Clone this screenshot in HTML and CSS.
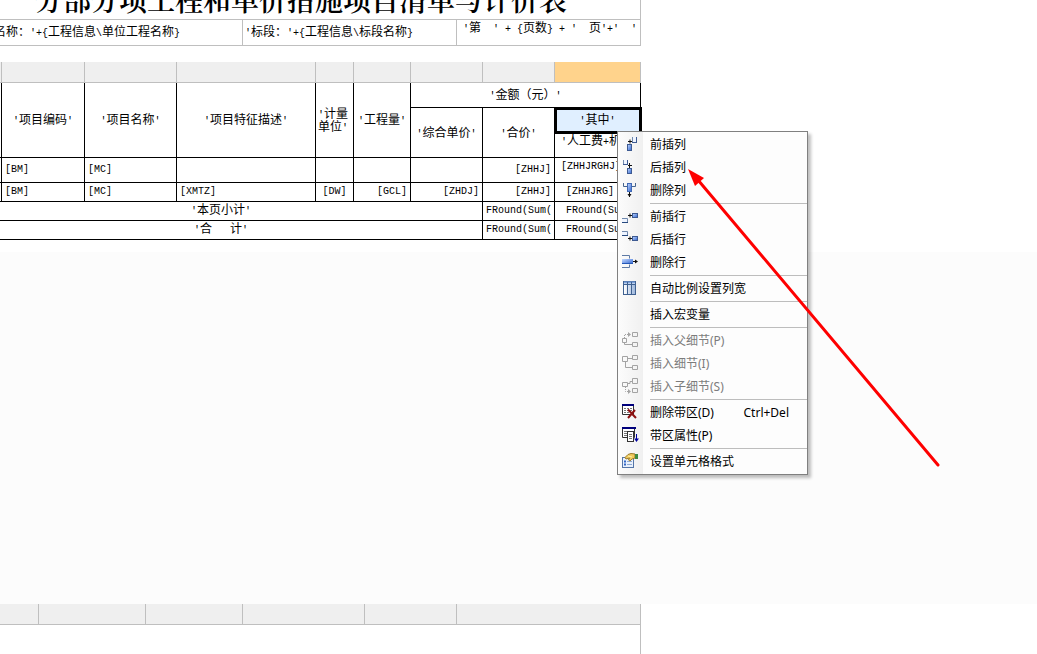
FILE: index.html
```html
<!DOCTYPE html>
<html lang="zh-CN">
<head>
<meta charset="utf-8">
<title>分部分项工程和单价措施项目清单与计价表</title>
<link rel="stylesheet" href="styles.css">
</head>
<body>
<svg class="defs" aria-hidden="true">
  <defs>
    <linearGradient id="blue" x1="0" y1="0" x2="1" y2="1"><stop offset="0" stop-color="#c4daff"/><stop offset="1" stop-color="#2f63cf"/></linearGradient>
    <linearGradient id="col" x1="0" y1="0" x2="1" y2="0"><stop offset="0" stop-color="#fff"/><stop offset="1" stop-color="#9db7dc"/></linearGradient>
  </defs>
</svg>
<main class="designer">
  <section class="head">
    <h1 class="title">分部分项工程和单价措施项目清单与计价表</h1>
    <div class="info">
      <div class="info-name">名称：<span class="l">'+{</span>工程信息<span class="l">\</span>单位工程名称<span class="l">}</span></div>
      <div class="info-section"><span class="l">'</span>标段：<span class="l">'+{</span>工程信息<span class="l">\</span>标段名称<span class="l">}</span></div>
      <div class="info-page"><span class="l">'</span>第<span class="l">&nbsp; ' + {</span>页数<span class="l">} + ' &nbsp;</span>页<span class="l">'+' &nbsp;'</span></div>
    </div>
  </section>

  <table class="grid">
    <colgroup><col class="c0"><col class="c1"><col class="c2"><col class="c3"><col class="c4"><col class="c5"><col class="c6"><col class="c7"><col class="c8"></colgroup>
    <tbody>
      <tr class="band"><td></td><td></td><td></td><td></td><td></td><td></td><td></td><td></td><td class="active"></td></tr>
      <tr class="tall">
        <th rowspan="3"></th>
        <th rowspan="3"><span class="l">'</span>项目编码<span class="l">'</span></th>
        <th rowspan="3"><span class="l">'</span>项目名称<span class="l">'</span></th>
        <th rowspan="3"><span class="l">'</span>项目特征描述<span class="l">'</span></th>
        <th rowspan="3" class="unit"><span class="l">'</span>计量<br>单位<span class="l">'</span></th>
        <th rowspan="3"><span class="l">'</span>工程量<span class="l">'</span></th>
        <th colspan="3"><span class="l">'</span>金额（元）<span class="l">'</span></th>
      </tr>
      <tr class="tall">
        <th rowspan="2"><span class="l">'</span>综合单价<span class="l">'</span></th>
        <th rowspan="2"><span class="l">'</span>合价<span class="l">'</span></th>
        <th class="selected"><span class="l">'</span>其中<span class="l">'</span></th>
      </tr>
      <tr class="tall"><th class="up clip"><span class="l">'</span>人工费<span class="l">+</span>机</th></tr>
      <tr class="tall code"><td></td><td>[BM]</td><td>[MC]</td><td></td><td></td><td></td><td></td><td class="r">[ZHHJ]</td><td class="up">[ZHHJRGHJ]</td></tr>
      <tr class="code"><td></td><td>[BM]</td><td>[MC]</td><td>[XMTZ]</td><td class="c">[DW]</td><td class="r">[GCL]</td><td class="r">[ZHDJ]</td><td class="r">[ZHHJ]</td><td class="tab">[ZHHJRG]</td></tr>
      <tr><td colspan="7" class="total"><span class="l">'</span>本页小计<span class="l">'</span></td><td class="sum">FRound(Sum(</td><td class="sum tab">FRound(Sum(</td></tr>
      <tr><td colspan="7" class="total"><span class="l">'</span>合<span class="l">&nbsp; &nbsp;</span>计<span class="l">'</span></td><td class="sum">FRound(Sum(</td><td class="sum tab">FRound(Sum(</td></tr>
    </tbody>
  </table>

  <div class="blank"></div>
  <div class="foot-band"><i></i><i></i><i></i><i></i><i></i><i></i></div>
  <div class="foot"></div>
</main>

<div class="menu" role="menu">
  <button class="item" role="menuitem"><svg class="ico" viewBox="0 0 17 17"><path d="M10.500 1v5.500h4V1" fill="#eef4ff" stroke="#7189ad"/><path d="M14.500 1v6M10 6.500h5" stroke="#3d5a92"/><path d="M6 5.500h4M8 3.500v4" stroke="#111"/><rect x="5.500" y="8.500" width="4" height="6" fill="url(#blue)" stroke="#3d5a92"/></svg>前插列</button>
  <button class="item" role="menuitem"><svg class="ico" viewBox="0 0 17 17"><path d="M1.500 1v4.500h4V1" fill="#eef4ff" stroke="#7189ad"/><path d="M5.500 1v5M1 5.500h5" stroke="#3d5a92"/><path d="M6 6.500h4M7.500 4v5" stroke="#111"/><rect x="5.500" y="9.500" width="4" height="5" fill="url(#blue)" stroke="#3d5a92"/></svg>后插列</button>
  <button class="item" role="menuitem"><svg class="ico" viewBox="0 0 17 17"><path d="M1.500 1v3.500h4M13.500 1v3.500h-4" fill="none" stroke="#45648f"/><rect x="5.500" y="1.500" width="4" height="8" fill="url(#blue)" stroke="#3f68b5"/><path d="M7.500 10v5" stroke="#111"/><path d="M5.500 12h4l-2 3z" fill="#111"/></svg>删除列</button>
  <hr>
  <button class="item" role="menuitem"><svg class="ico" viewBox="0 0 17 17"><path d="M0 10.500h5.500v4H0" fill="#eef4ff" stroke="#7189ad"/><path d="M0 14.500h6" stroke="#27497f"/><path d="M6 7.500h4M8 5.500v4" stroke="#111"/><rect x="10.500" y="5.500" width="5" height="4" fill="url(#blue)" stroke="#3d5a92"/></svg>前插行</button>
  <button class="item" role="menuitem"><svg class="ico" viewBox="0 0 17 17"><path d="M0 .5h5.500v4H0" fill="#eef4ff" stroke="#7189ad"/><path d="M0 4.500h6" stroke="#27497f"/><path d="M6 7.500h4M8 5.500v4" stroke="#111"/><rect x="10.500" y="5.500" width="5" height="4" fill="url(#blue)" stroke="#3d5a92"/></svg>后插行</button>
  <button class="item" role="menuitem"><svg class="ico" viewBox="0 0 17 17"><path d="M0 1.500h7.500v3M0 13.500h7.500v-3" fill="none" stroke="#5e7aa5"/><rect x="0" y="5" width="11" height="5" fill="url(#blue)"/><path d="M0 9.500h11" stroke="#2458b8"/><path d="M11 7.500h4" stroke="#111"/><path d="M13 5.500v4l3-2z" fill="#111"/></svg>删除行</button>
  <hr>
  <button class="item" role="menuitem"><svg class="ico" viewBox="0 0 17 17"><rect x="1.500" y="1.500" width="12" height="13" fill="#fff" stroke="#3f6191"/><path d="M2 4h3v10H2zM6 4h3v10H6zM10 4h3v10h-3z" fill="url(#col)"/><path d="M2 2.500h11" stroke="#7da3dc" stroke-width="2"/><path d="M5.500 2v12M9.500 2v12M1 4.500h13" stroke="#3f6191"/></svg>自动比例设置列宽</button>
  <hr>
  <button class="item plain" role="menuitem">插入宏变量</button>
  <hr>
  <button class="item" role="menuitem" disabled><svg class="ico" viewBox="0 0 17 17"><path d="M.5 6.500h4v4h-4zM10.500.5h5v4h-5zM10.500 10.500h5v4h-5zM2.500 11v1.500h8" fill="none" stroke="#a3a3a3"/><path d="M2.500 6V2.500h4" fill="none" stroke="#a3a3a3" stroke-dasharray="1 1"/><path d="M6 0v5l3-2.500z" fill="#a3a3a3"/></svg>插入父细节(P)</button>
  <button class="item" role="menuitem" disabled><svg class="ico" viewBox="0 0 17 17"><path d="M.5 1.500h5v5h-5zM10.500.5h5v4h-5zM10.500 10.500h5v4h-5zM6 3.500h4M3.500 7v5.500h7" fill="none" stroke="#a3a3a3"/></svg>插入细节(I)</button>
  <button class="item" role="menuitem" disabled><svg class="ico" viewBox="0 0 17 17"><path d="M.5 4.500h5v4h-5zM10.500.5h5v5h-5zM10.500 10.500h5v4h-5zM6 5.500h2v-2h2" fill="none" stroke="#a3a3a3"/><path d="M3.500 9v4.500h3" fill="none" stroke="#a3a3a3" stroke-dasharray="1 1"/><path d="M6 11v5l3-2.500z" fill="#a3a3a3"/></svg>插入子细节(S)</button>
  <hr>
  <button class="item" role="menuitem"><svg class="ico" viewBox="0 0 17 17"><path d="M.5 1v9.500h11V1" fill="#fff" stroke="#333"/><path d="M0 1h12" stroke="#00007c" stroke-width="2"/><path d="M2 4.500h8M2 6.500h8M2 8.500h8" stroke="#777" stroke-dasharray="2 1"/><path d="M6 5.500l8 8.500M13 6l-7 8" stroke="#8c1010" stroke-width="2"/></svg>删除带区(D)<span class="key">Ctrl+Del</span></button>
  <button class="item" role="menuitem"><svg class="ico" viewBox="0 0 17 17"><path d="M.5 1v9.500h12V1" fill="#fff" stroke="#333"/><path d="M0 1h14" stroke="#00007c" stroke-width="2"/><path d="M2 4.500h3M2 6.500h3M2 8.500h3" stroke="#777"/><rect x="5.500" y="4.500" width="6" height="10" fill="#fff" stroke="#333"/><path d="M7 7.500h3M7 9.500h3M7 11.500h3" stroke="#777"/><path d="M14.500 7v6" stroke="#0000a0"/><path d="M12 11.500h5l-2.500 3.500z" fill="#0000a0"/></svg>带区属性(P)</button>
  <hr>
  <button class="item" role="menuitem"><svg class="ico" viewBox="0 0 17 17"><rect x=".5" y="4.500" width="11" height="10" fill="#e9f1fc" stroke="#5576a8"/><path d="M2 8.500h2M2 11.500h2" stroke="#3268c8" stroke-width="2"/><path d="M5 8.500h5M5 11.500h5" stroke="#8da9d4"/><path d="M3 4.500l3-3 3-1 4 .5v4l-3 1-2 2-1.500-1 1-2-3.500 1z" fill="#f0ca5c" stroke="#9a7a2a"/><path d="M13 1h3v5h-3z" fill="#3c8a43"/><path d="M6 3l4 1" stroke="#fff0a8"/></svg>设置单元格格式</button>
</div>

<svg class="arrow" width="260" height="305" viewBox="0 0 260 305" aria-hidden="true"><path d="M12 14L252 299" stroke="#fe0000" stroke-width="3" stroke-linecap="round"/><path d="M2 3l16 9-9 8z" fill="#fe0000"/></svg>
</body>
</html>
```
FILE: styles.css
```css
* { box-sizing: border-box; }

body {
  margin: 0;
  position: relative;
  min-height: 100vh;
  overflow: hidden;
  background: #fff;
  color: #000;
  font: 12px/12px "Liberation Mono", "Noto Sans CJK SC", monospace;
}

.defs { position: absolute; width: 0; height: 0; }

.designer {
  display: flex;
  flex-direction: column;
  min-height: 100vh;
}

/* Latin glyphs run at half the width of a CJK glyph */
.l { font-size: 10px; white-space: pre; }

/* report heading */
.head {
  width: 641px;
  border-right: 1px solid #bfbfbf;
  border-bottom: 1px solid #bfbfbf;
  margin-bottom: 16px;
}
.title {
  height: 20px;
  margin: 0;
  padding-right: 38px;
  border-bottom: 1px solid #bfbfbf;
  display: flex;
  align-items: flex-end;
  justify-content: center;
  font: 600 28px/40px "Noto Serif CJK SC", "Noto Sans CJK SC", serif;
  white-space: nowrap;
}
.info { display: flex; height: 25px; white-space: pre; }
.info > div { padding-top: 7px; }
.info > div + div { border-left: 1px solid #bfbfbf; }
/* the heading starts left of the visible area */
.info-name { width: 248px; margin-left: -6px; }
.info-section { width: 214px; padding-left: 2px; }
.info > .info-page { flex: 1; padding: 3px 0 0 6px; }

/* report grid */
.grid {
  width: 641px;
  table-layout: fixed;
  border-collapse: separate;
  border-spacing: 0;
  margin-bottom: 12px;
}
.c0 { width: 2px; }
.c1 { width: 83px; }
.c2 { width: 92px; }
.c3 { width: 139px; }
.c4 { width: 38px; }
.c5 { width: 57px; }
.c6, .c7 { width: 72px; }
.c8 { width: 86px; }

.grid tr { height: 19px; }
.grid .tall { height: 25px; }
.grid .band { height: 21px; }
.grid td, .grid th {
  padding: 0;
  border-right: 1px solid #000;
  border-bottom: 1px solid #000;
  font-weight: normal;
  white-space: nowrap;
}
.grid th { padding-top: 3px; text-align: center; }
.grid .total { padding-right: 40px; text-align: center; }
.grid .band td { background: #efefef; border-color: #bfbfbf; }
.grid .band .active { background: #ffd38c; }
.grid .unit { text-align: left; padding-left: 2px; }
.grid .selected { background: #e0efff; outline: 3px solid #000; outline-offset: -2px; }
.grid .up { vertical-align: top; padding-top: 3px; }
.grid .clip { text-align: left; padding-left: 6px; }
.code td, .grid .sum { font-size: 10px; padding-left: 3px; }
.code td:first-child { padding-left: 0; }
.grid .r { text-align: right; padding-right: 3px; }
.grid .c { text-align: center; padding: 0; }
.grid .code .up { padding-left: 6px; }
.grid .tab { padding-left: 11px; }

/* empty design area and the next band */
.blank { flex: 0 0 352px; background: #fcfcfc; }
.foot-band {
  display: grid;
  grid-template-columns: 39px 107px 97px 122px 92px 184px;
  width: 641px;
  height: 21px;
  background: #efefef;
  border-bottom: 1px solid #bfbfbf;
}
.foot-band i { border-right: 1px solid #bfbfbf; }
.foot { flex: 1; width: 641px; border-right: 1px solid #bfbfbf; }

/* context menu */
.menu {
  position: absolute;
  left: 617px;
  top: 131px;
  width: 191px;
  padding: 1px 0;
  border: 1px solid #808080;
  background: linear-gradient(90deg, #fcfcfc, #f0f0f0 25px, #fdfdfd 25px);
  box-shadow: 3px 3px 3px rgba(0, 0, 0, .25);
  font: 12px/23px "Noto Sans", "Noto Sans CJK SC", sans-serif;
}
.item {
  display: flex;
  align-items: center;
  width: 100%;
  height: 23px;
  padding: 0 0 0 4px;
  border: 0;
  background: none;
  color: #000;
  font: inherit;
  text-align: left;
  white-space: nowrap;
}
.item:disabled { color: #7c7c7c; }
.item.plain { padding-left: 32px; }
.ico { flex: none; width: 17px; height: 17px; margin-right: 11px; }
.key { margin: 0 18px 0 auto; }
.menu hr {
  height: 3px;
  margin: 0 0 0 32px;
  border: solid transparent;
  border-width: 1px 0;
  background: #bdbdbd content-box;
}

.arrow { position: absolute; left: 686px; top: 166px; pointer-events: none; }
```
